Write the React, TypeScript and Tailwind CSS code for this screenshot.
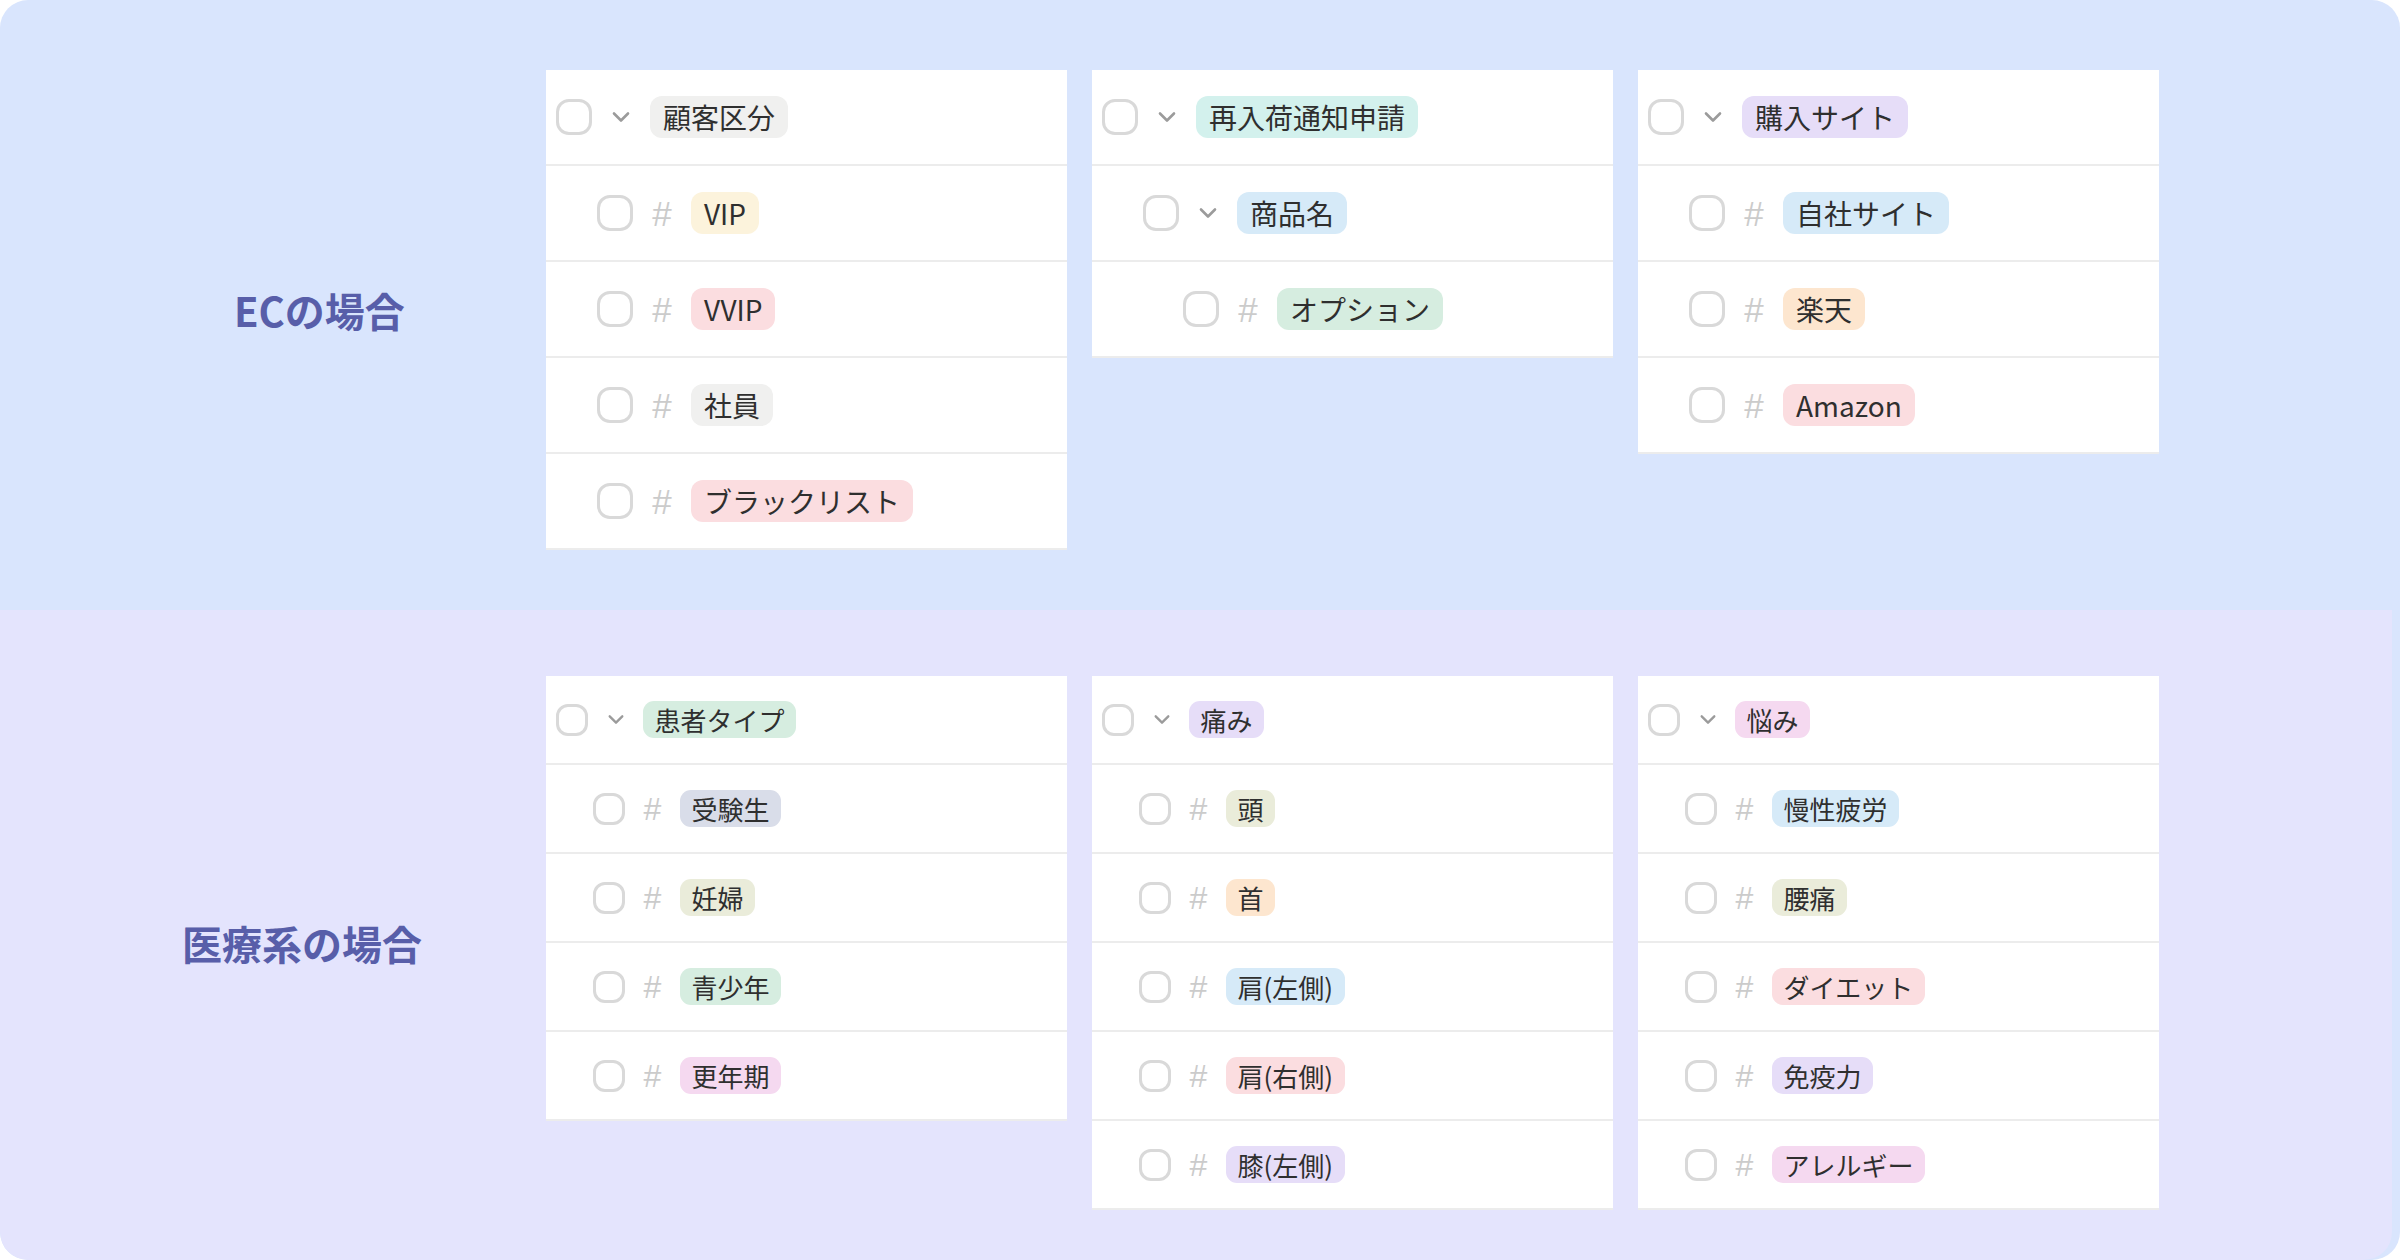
import React from "react";

type Color =
  | "gray"
  | "yellow"
  | "red"
  | "teal"
  | "blue"
  | "green"
  | "purple"
  | "orange"
  | "slate"
  | "olive"
  | "pink";

const COLORS: Record<Color, string> = {
  gray: "bg-[#f0f0ef]",
  yellow: "bg-[#fcf3dc]",
  red: "bg-[#fbdde0]",
  teal: "bg-[#d3f1ed]",
  blue: "bg-[#d6eaf8]",
  green: "bg-[#d6ede0]",
  purple: "bg-[#e6ddf8]",
  orange: "bg-[#fde6cf]",
  slate: "bg-[#d9dde9]",
  olive: "bg-[#eaecda]",
  pink: "bg-[#f5d9f0]",
};

type Item = { label: string; color: Color; level: number; parent?: boolean };

type Size = {
  row: string;
  pad: string[];
  box: string;
  gap: string;
  slot: string;
  tag: string;
  hash: string;
  chevW: number;
  chevH: number;
};

const BIG: Size = {
  row: "h-[96px]",
  pad: ["pl-[10px]", "pl-[51px]", "pl-[91px]"],
  box: "w-[36px] h-[36px] rounded-[13px]",
  gap: "gap-[12px]",
  slot: "w-[34px]",
  tag: "h-[42px] px-[13px] text-[28px] leading-[42px] rounded-[12px]",
  hash: "text-[35px]",
  chevW: 20,
  chevH: 12,
};

const SMALL: Size = {
  row: "h-[89px]",
  pad: ["pl-[10px]", "pl-[47px]", "pl-[84px]"],
  box: "w-[32px] h-[32px] rounded-[12px]",
  gap: "gap-[11px]",
  slot: "w-[33px]",
  tag: "h-[37px] px-[11.5px] text-[26px] leading-[37px] rounded-[11px]",
  hash: "text-[32px]",
  chevW: 18,
  chevH: 11,
};

function Chevron({ w, h }: { w: number; h: number }) {
  return (
    <svg width={w} height={h} viewBox="0 0 20 12" fill="none">
      <polyline
        points="3,2.5 10,9.5 17,2.5"
        stroke="#9b9b9b"
        strokeWidth="2.6"
        strokeLinecap="round"
        strokeLinejoin="round"
      />
    </svg>
  );
}

function Row({ item, size }: { item: Item; size: Size }) {
  return (
    <div
      className={`flex items-center border-b-2 border-[#ececec] ${size.row} ${size.pad[item.level]} ${size.gap}`}
    >
      <div className={`shrink-0 border-[3px] border-[#d9d9d9] bg-white ${size.box}`} />
      <div className={`flex shrink-0 items-center justify-center ${size.slot}`}>
        {item.parent ? (
          <Chevron w={size.chevW} h={size.chevH} />
        ) : (
          <span className={`font-['Liberation_Sans',sans-serif] leading-none text-[#cbcbcb] ${size.hash}`}>#</span>
        )}
      </div>
      <span className={`whitespace-nowrap text-[#2f2f2f] ${COLORS[item.color]} ${size.tag}`}>
        {item.label}
      </span>
    </div>
  );
}

function Card({ items, size }: { items: Item[]; size: Size }) {
  return (
    <div className="w-[521px] shrink-0 bg-white">
      {items.map((it, i) => (
        <Row key={i} item={it} size={size} />
      ))}
    </div>
  );
}

const EC: Item[][] = [
  [
    { label: "顧客区分", color: "gray", level: 0, parent: true },
    { label: "VIP", color: "yellow", level: 1 },
    { label: "VVIP", color: "red", level: 1 },
    { label: "社員", color: "gray", level: 1 },
    { label: "ブラックリスト", color: "red", level: 1 },
  ],
  [
    { label: "再入荷通知申請", color: "teal", level: 0, parent: true },
    { label: "商品名", color: "blue", level: 1, parent: true },
    { label: "オプション", color: "green", level: 2 },
  ],
  [
    { label: "購入サイト", color: "purple", level: 0, parent: true },
    { label: "自社サイト", color: "blue", level: 1 },
    { label: "楽天", color: "orange", level: 1 },
    { label: "Amazon", color: "red", level: 1 },
  ],
];

const MED: Item[][] = [
  [
    { label: "患者タイプ", color: "green", level: 0, parent: true },
    { label: "受験生", color: "slate", level: 1 },
    { label: "妊婦", color: "olive", level: 1 },
    { label: "青少年", color: "green", level: 1 },
    { label: "更年期", color: "pink", level: 1 },
  ],
  [
    { label: "痛み", color: "purple", level: 0, parent: true },
    { label: "頭", color: "olive", level: 1 },
    { label: "首", color: "orange", level: 1 },
    { label: "肩(左側)", color: "blue", level: 1 },
    { label: "肩(右側)", color: "red", level: 1 },
    { label: "膝(左側)", color: "purple", level: 1 },
  ],
  [
    { label: "悩み", color: "pink", level: 0, parent: true },
    { label: "慢性疲労", color: "blue", level: 1 },
    { label: "腰痛", color: "olive", level: 1 },
    { label: "ダイエット", color: "red", level: 1 },
    { label: "免疫力", color: "purple", level: 1 },
    { label: "アレルギー", color: "pink", level: 1 },
  ],
];

export default function App() {
  return (
    <div className="w-[2400px] h-[1260px] bg-white font-['Noto_Sans_CJK_JP',sans-serif]">
      <div className="w-[2400px] h-[1260px] overflow-hidden rounded-[28px] bg-[#d9e5fd]">
        <section className="flex h-[610px] pt-[70px]">
          <div className="flex h-[480px] w-[546px] shrink-0 items-center pl-[234px]">
            <h2 className="text-[40px] font-bold leading-none text-[#585ea9]">ECの場合</h2>
          </div>
          <div className="flex items-start gap-[25px]">
            {EC.map((items, i) => (
              <Card key={i} items={items} size={BIG} />
            ))}
          </div>
        </section>
        <section className="flex h-[650px] w-[2392px] rounded-b-[28px] bg-[#e4e4fd] pt-[66px]">
          <div className="flex h-[534px] w-[546px] shrink-0 items-center pl-[182px]">
            <h2 className="text-[40px] font-bold leading-none text-[#585ea9]">医療系の場合</h2>
          </div>
          <div className="flex items-start gap-[25px]">
            {MED.map((items, i) => (
              <Card key={i} items={items} size={SMALL} />
            ))}
          </div>
        </section>
      </div>
    </div>
  );
}
